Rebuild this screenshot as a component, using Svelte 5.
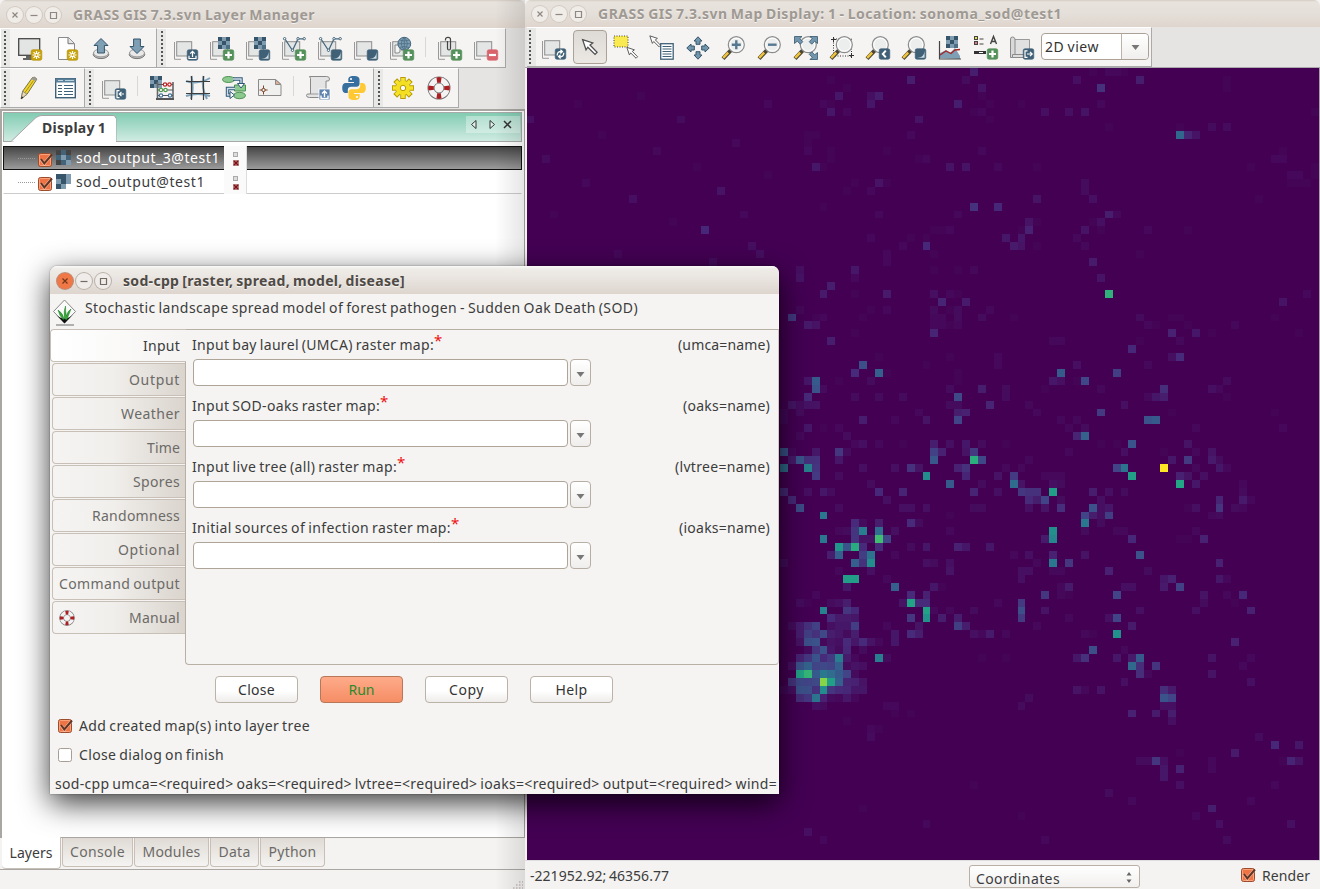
<script>
  // Viridis ramp in steps of ten percent.
  const ramp = [
    [68, 1, 84], [72, 36, 117], [65, 68, 135], [53, 95, 141], [42, 120, 142], [33, 145, 140],
    [34, 168, 132], [68, 191, 112], [122, 209, 81], [189, 223, 38], [253, 231, 37]
  ];
  function viridis(v) {
    const i = Math.min(9, Math.floor(v / 10));
    const f = v / 10 - i;
    return `rgb(${ramp[i].map((c, k) => Math.round(c + (ramp[i + 1][k] - c) * f)).join(',')})`;
  }

  // Raster samples "x,y,percent", one block per map section; each block has
  // its own origin and scale and is snapped to the 100 x 100 grid.
  const CELL = 7.92;
  const blocks = [
    { x: 253, y: 2, sx: 2.904, sy: 3, d: '563,8,8 383,30,8 540,30,3 586,54,5 150,30,1 174,78,6 197,54,1 267,78,4 290,78,8 267,102,6 127,102,2 150,102,1 150,126,6 197,126,2 516,102,8 586,78,1 609,102,1 563,126,1 586,126,2 609,149,1 404,149,5 383,195,2 85,195,1 105,195,1 83,219,1 83,243,2 150,243,1 150,267,1 313,243,1 404,267,1 425,267,2 586,243,2 105,291,6 127,291,1 493,291,5 540,291,5 633,291,2 748,291,1 290,339,5 313,339,1 220,339,1 267,363,2 197,363,1 748,387,5 563,411,14 633,411,11 127,411,1 290,434,2 516,434,2 725,457,5 748,457,1 725,481,9 448,481,1 470,481,1 493,481,2 656,504,6 702,504,6 702,481,1 679,528,7 702,528,5 748,528,1 425,528,11 267,504,2 383,504,1 425,504,1 360,528,2 313,552,2 313,576,2 448,552,1 61,600,4 61,624,5 220,600,6 220,624,2 448,600,1 516,600,1 563,600,2 150,648,8 127,672,7 313,672,7 220,672,1 448,672,4 493,672,2 516,672,1 470,696,10 540,696,7 61,720,2 267,720,1 313,720,2 448,720,3 493,720,1 516,720,3 609,720,2 37,742,17 103,742,1 127,742,2 244,742,1 448,742,2 470,742,2 516,742,3 586,742,3 679,742,1 83,766,7 105,766,5 448,766,2 470,766,2 493,766,1 516,766,2 448,789,10 220,789,1 150,813,8 793,813,2 816,813,2 862,30,4 932,54,14 1048,30,8 908,8,1 955,8,2 978,8,2 1001,8,1 702,102,1 932,102,2 769,126,4 839,126,4 885,126,5 955,172,1 1300,30,1 1300,54,1 1161,195,33 1184,195,10 1207,195,5 1254,172,3 1300,172,3 1161,172,1 1550,126,1 1460,243,1 1437,267,2 1460,267,2 1370,291,1 1484,315,2 1507,315,2 1550,291,1 1550,315,1 1484,339,1 1507,339,1 1530,339,1 885,339,3 885,363,3 908,387,4 955,434,8 978,434,2 932,457,4 908,457,1 885,481,5 932,481,1 862,504,2 885,528,2 1070,481,2 1184,481,1 1391,387,1 1048,552,1 908,576,7 932,624,5 955,672,64 1530,672,2 1460,696,5 1048,742,3 1070,766,2 1093,766,1 1138,742,1 1161,742,1 1184,766,1 1323,766,2 1138,789,9 1207,789,6 1254,789,1 1161,813,2 1507,789,1 1025,833,11 1048,813,1 1437,742,1' },
    { x: 253, y: 232, sx: 3, sy: 3, d: '252,195,24 228,219,12 300,219,30 324,219,1 84,243,6 108,243,28 180,243,1 276,243,3 108,267,25 132,267,3 84,291,12 228,291,3 300,291,3 372,291,3 39,315,6 63,315,3 84,315,5 108,315,5 63,339,3 15,339,2 15,363,2 252,360,8 348,360,2 439,360,5 420,339,2 84,384,6 63,408,2 204,408,3 180,384,2 132,384,1 252,432,4 228,432,2 300,432,2 372,432,1 15,456,26 39,456,2 108,456,6 180,456,16 204,456,3 39,480,7 63,480,26 84,480,14 108,480,14 180,480,6 15,504,35 84,504,43 108,504,15 252,504,4 348,504,4 396,504,14 420,504,5 108,528,17 180,528,3 439,528,48 276,552,3 15,576,12 84,576,4 132,576,6 156,576,3 300,576,11 372,576,10 39,600,12 63,624,23 324,600,4 180,624,3 372,624,4 396,624,4 439,624,4 132,646,40 510,646,1 228,670,12 252,670,3 300,670,8 396,670,12 420,670,3 204,692,3 180,692,2 228,692,15 252,692,42 300,692,36 348,692,4 510,692,2 132,717,40 228,717,15 252,717,5 276,717,5 300,717,69 324,717,20 180,741,52 204,741,26 228,741,62 252,741,12 300,741,12 396,741,3 439,741,6 534,741,9 558,741,6 630,741,6 156,765,8 180,765,30 252,765,18 276,765,38 348,765,2 228,789,30 252,789,14 276,789,48 439,789,4 465,789,3 510,789,4 15,789,3 300,170,1 510,170,1 654,170,2 654,195,2 439,195,1 534,219,1 534,243,1 510,267,3 606,267,8 678,267,3 534,291,22 678,291,3 510,315,3 534,315,3 630,315,10 750,315,2 534,339,8 558,339,9 534,360,20 558,432,6 558,456,5 582,456,17 582,480,63 606,480,21 462,432,8 510,432,4 462,456,19 486,456,9 462,480,27 534,504,9 558,504,14 558,528,10 606,432,3 678,432,1 510,552,28 606,552,3 582,576,10 654,576,4 654,528,5 582,624,3 606,624,3 702,528,17 702,552,35 726,552,5 678,504,2 726,504,2 750,480,2 726,576,16 750,576,12 774,576,12 750,600,10 774,600,9 796,600,22 796,624,8 750,624,4 796,717,8 702,765,2 750,765,4 774,789,3 796,267,2 774,339,2' },
    { x: 253, y: 472, sx: 3, sy: 3, d: '276,93,4 180,93,2 204,117,55 228,117,55 204,141,6 348,141,30 324,117,2 108,165,2 396,165,12 439,165,9 462,141,6 486,141,1 372,189,5 396,189,58 420,189,12 439,189,12 63,189,3 84,189,1 156,189,3 180,189,4 204,189,8 132,211,44 204,211,16 228,211,11 439,211,57 439,235,51 156,235,12 180,235,7 204,235,7 228,235,6 396,235,16 486,235,8 462,211,2 510,211,2 534,235,8 534,258,18 558,258,8 582,211,3 39,258,3 63,258,8 84,258,14 108,258,19 180,258,6 204,258,6 228,258,18 156,258,4 420,258,5 63,282,8 84,282,18 108,282,14 132,282,22 156,282,8 180,282,6 228,282,8 204,282,3 348,282,6 396,282,12 420,282,8 324,258,2 582,282,4 606,282,2 630,282,7 678,282,2 63,306,5 84,306,24 108,306,25 132,306,2 156,306,5 180,306,4 204,306,12 228,306,6 252,306,12 276,306,5 348,306,6 300,306,2 84,330,3 108,330,15 132,330,25 156,330,6 180,330,3 204,330,11 252,330,3 63,354,10 84,354,16 108,354,26 132,354,12 156,354,17 180,354,42 204,354,7 228,354,2 300,354,42 324,354,3 39,378,4 63,378,26 84,378,32 108,378,20 132,378,22 156,378,20 180,378,30 204,378,3 228,378,5 252,378,4 63,402,58 84,402,66 108,402,28 132,402,40 156,402,35 180,402,28 204,402,20 228,402,3 39,426,15 63,426,22 84,426,20 108,426,22 132,426,82 156,426,56 180,426,30 204,426,10 228,426,9 252,426,5 15,450,2 39,450,4 63,450,25 84,450,24 108,450,14 132,450,48 156,450,15 180,450,12 204,450,11 228,450,6 252,450,6 63,474,13 84,474,16 108,474,38 132,474,9 156,474,3 180,474,2 204,474,6 228,474,2 108,498,4 132,498,3 324,498,2 348,498,2 204,545,1 276,569,2 300,569,1 276,590,3 510,93,5 750,93,5 726,93,4 726,117,4 796,165,15 726,189,17 726,211,24 726,235,17 654,189,2 796,211,4 774,258,2 606,354,1 678,354,1 750,474,4 726,498,3 348,522,1 396,522,1' },
    { x: 503, y: 282, sx: 3, sy: 3, d: '309,2,11 450,21,12 426,21,4 141,45,4 357,45,2 93,69,28 69,93,6 93,93,4 165,93,21 261,69,18 141,93,1 45,117,1 213,117,2 402,117,13 378,141,6 402,141,8 357,141,2 594,93,3 546,117,4 570,117,2 594,141,1 285,165,4 213,188,17 426,188,1 736,188,1 357,210,26 378,210,28 93,210,2 141,210,2 117,234,2 165,234,3 498,234,2 760,234,2 141,258,10 165,258,31 213,282,1 261,282,1 309,282,26 474,282,5 285,306,4 474,330,17 426,330,6 498,306,2 546,306,5 546,330,7 570,330,3 402,306,1 117,300,2 261,354,20 285,354,38 309,378,55 402,354,100 450,378,9 474,378,5 522,378,4 498,354,2 570,354,6 594,354,2 450,402,59 498,402,6 69,402,4 93,402,3 45,378,2 69,378,2 93,378,2 69,426,55 3,426,14 21,426,14 189,426,8 237,426,4 285,426,3 642,402,2 642,426,3 21,450,8 3,450,12 45,450,20 93,450,3 213,450,4 570,450,10 642,450,7 666,450,2 45,474,5 93,474,13 189,474,25 213,474,4 237,474,6 498,474,4 474,474,1 570,474,15 618,474,3 642,474,2 165,496,20 189,496,8 213,496,4 237,496,18 570,496,3 546,496,2 165,519,40 213,519,3 69,543,49 69,566,45 45,566,7 165,543,3 261,543,2 285,543,2 309,566,11 522,566,9 498,543,2 450,566,1 474,566,1 333,615,25 69,615,9 165,615,5 69,639,40 117,639,16 21,639,2 570,639,9 3,663,4 69,663,2 93,663,2 237,663,9 357,663,3 402,687,6 426,687,9 402,711,7 450,711,19 570,687,6 594,687,2 117,711,7 93,711,2 285,711,4 309,711,4 45,735,16 93,735,2 117,735,1 261,735,20 522,735,5 594,735,2 642,735,11 522,759,3 618,759,1 45,781,5 333,781,4 498,781,4 666,781,9 117,804,2 237,804,4 261,804,20 21,828,2 309,828,7 261,852,50 165,852,2 189,852,1 618,876,9 189,900,24 285,900,2 141,924,6 165,924,14 261,924,6 309,924,7 333,924,28 309,948,34 333,948,13 378,948,15 333,970,13 357,960,2 546,924,5 546,970,5 666,924,2 642,948,2 285,996,4 666,996,4 141,1020,5 165,1020,2 213,1020,5 402,1020,13 426,1020,7 402,1044,26 426,1044,20 402,1068,4 426,1068,4 309,1090,9 378,1090,7 426,1090,8 426,1113,4 688,1160,3 736,1184,11 807,1184,6 618,1208,7 450,1208,1 378,1232,15 333,1232,3 357,1232,3 402,1232,4 783,1232,10 807,1232,5 760,1232,1 546,1232,2 402,1254,6 450,1254,11 546,1254,2 3,1044,3' },
    { x: 0, y: 0, sx: 1, sy: 1, d: '178,162,11 4,52,4 20,90,3 28,146,1 52,35,1 60,114,2 75,67,1 92,186,2 107,130,4 115,28,1 131,83,2 147,154,1 155,51,3 170,99,1 186,194,3 194,122,5 210,75,2 218,146,2 226,178,4 234,186,4 242,35,2 242,107,1 281,761,4 297,776,2 337,740,1 400,753,2 448,713,1 495,745,1 519,769,2 582,721,3 606,729,2 637,705,6 653,713,4 653,697,9 669,745,2 685,737,8 693,753,4 701,769,3 724,729,2 748,713,2 764,753,4' }
  ];
  const cells = blocks.flatMap((b) =>
    b.d.split(' ').map((s) => {
      const [px, py, v] = s.split(',').map(Number);
      const c = Math.floor((b.x + px / b.sx) / CELL);
      const r = Math.floor((b.y + py / b.sy) / CELL);
      const x = Math.floor(c * CELL), y = Math.round(r * CELL);
      return { x, y, w: Math.floor((c + 1) * CELL) - x, h: Math.round((r + 1) * CELL) - y, fill: viridis(v) };
    })
  );

  // Spreads a line of text over a given width.
  function fit(node, width) {
    const w = node.getBoundingClientRect().width;
    node.style.letterSpacing = (width - w) / node.textContent.length + 'px';
  }

  const layerBars = [
    ['display', 'newfile', 'upload', 'download'],
    ['stackload', 'rastadd', 'rastmisc', 'vectadd', 'vectmisc', 'stackmisc', 'wms', '|', 'clip', 'stackdel']
  ];
  const toolBars = [
    ['pencil', 'table'],
    ['stackimport', '|', 'calc', 'georef', 'modeler', 'layout', '|', 'script', 'python'],
    ['gear', 'buoy']
  ];
  const mapTools = ['stackrender', 'pointer', 'select', 'query', 'pan', 'zoomin', 'zoomout', 'zoomext', 'zoomreg', 'zoomback', 'zoommisc', 'analyze', 'overlay', 'saveimg'];
  const layers = [
    { name: 'sod_output_3@test1', w: 144, on: true },
    { name: 'sod_output@test1', w: 129, on: false }
  ];
  const bottomTabs = [['Layers', 43, 59], ['Console', 55, 71], ['Modules', 58, 75], ['Data', 32, 49], ['Python', 48, 65]];
  const sideTabs = [['Input', 37], ['Output', 51], ['Weather', 59], ['Time', 33], ['Spores', 47], ['Randomness', 88], ['Optional', 62], ['Command output', 121], ['Manual', 51]];
  const fields = [
    ['Input bay laurel (UMCA) raster map:', 242, '(umca=name)', 92],
    ['Input SOD-oaks raster map:', 188, '(oaks=name)', 87],
    ['Input live tree (all) raster map:', 205, '(lvtree=name)', 95],
    ['Initial sources of infection raster map:', 259, '(ioaks=name)', 91]
  ];
</script>

{#snippet stack()}
  <path d="M.5 5v17.3H7" fill="none" stroke="#999" />
  <rect x="2.7" y="4.7" width="15" height="14.3" fill="#e4e5e5" stroke="#8d8d8d" />
{/snippet}
{#snippet badge(kind)}
  {@const fill = { add: '#55915a', del: '#d9646b', star: '#c9a40c' }[kind] ?? '#3f6076'}
  <rect x="13.2" y="12.7" width="10.6" height="10.6" rx="1.8" {fill} stroke={kind === 'star' ? '#af8c00' : fill} stroke-width=".6" />
  {#if kind === 'add'}<path d="M18.5 14.5v7M15 18h7" stroke="#fff" stroke-width="2.2" />
  {:else if kind === 'del'}<path d="M15 18h7" stroke="#fff" stroke-width="2.2" />
  {:else if kind === 'star'}<path d="M18.5 14v8M14.5 18h8M15.6 15.1l5.8 5.8M21.4 15.1l-5.8 5.8" stroke="#fff" stroke-width="1.2" /><circle cx="18.5" cy="18" r="1" fill="#c9a40c" />
  {:else if kind === 'misc'}<path d="M14.5 15V14h8c0 4-2.5 6.500-6.500 6.500z" fill="#3f6076" /><path d="M15 21.800c4.800 0 7.200-2.300 7.600-7.200v7.200z" fill="#cddae2" />
  {:else if kind === 'up'}<path d="M18.500 20v-5.500M16.200 16.600l2.300-2.300 2.300 2.300M15 18.800v2.700h7v-2.700" fill="none" stroke="#fff" stroke-width="1.200" />
  {:else if kind === 'left'}<path d="M22 18h-4.500M19.500 15.800L17.300 18l2.200 2.200M17.500 14.600H15v7h2.500" fill="none" stroke="#fff" stroke-width="1.200" />
  {:else if kind === 'right'}<path d="M17 18h5M20 15.800l2.200 2.200-2.200 2.200M17.500 14.800H15v6.500h2.500" fill="none" stroke="#fff" stroke-width="1.200" />
  {:else if kind === 'back'}<path d="M19.800 14.600L16.800 18l3 3.400" fill="none" stroke="#fff" stroke-width="2" />
  {:else if kind === 'sync'}<path d="M15.200 19.500c0-3 1.500-4.200 4.500-4M18.400 13.800l2 1.800-2 1.800M21.800 16.800c0 3-1.500 4.200-4.500 4M18.600 18.800l-2 1.800 2 1.800" fill="none" stroke="#fff" stroke-width="1.300" />{/if}
{/snippet}
{#snippet checker()}
  <rect x="8" width="12" height="12" fill="#7e9bb0" />
  <path d="M8 0h4v4H8zM16 0h4v4h-4zM12 4h4v4h-4zM8 8h4v4H8z" fill="#36546a" />
  <path d="M16 8h4v4h-4z" fill="#4d6f86" />
{/snippet}
{#snippet vect()}
  <path d="M3 2l7.500 11.500L16 1.800h6.500" fill="none" stroke="#45677d" stroke-width="1.300" />
  <g fill="#fff" stroke="#45677d"><circle cx="2.600" cy="1.700" r="1.200" /><circle cx="10.500" cy="13.300" r="1.200" /><circle cx="16" cy="1.700" r="1.200" /><circle cx="22.200" cy="1.700" r="1.200" /></g>
{/snippet}
{#snippet lens()}
  <path d="M1 22.600l7.800-8.200" stroke="#4b4534" stroke-width="4" />
  <path d="M1.200 21.800l5-5.200" stroke="#f0c53c" stroke-width="2.400" />
  <circle cx="14.300" cy="8.700" r="8" fill="#eceeee" stroke="#8b8b8b" stroke-width="1.200" />
  <circle cx="14.300" cy="8.700" r="6.500" fill="none" stroke="#fff" />
{/snippet}
{#snippet arrow()}
  <path d="M1 1l9 3-2.500 1.800 6.300 6.400-1.800 1.800-6.400-6.300L4 10z" fill="#fff" stroke="#4f4f4f" stroke-width="1.100" />
{/snippet}
{#snippet buoy()}
  <circle cx="12" cy="12" r="8" fill="none" stroke="#6f6f6f" stroke-width="7" />
  <circle cx="12" cy="12" r="8" fill="none" stroke="#f3f3f3" stroke-width="5.400" />
  <path d="M9.400 1.400a11 11 0 015.200 0L13.700 7a6 6 0 00-3.400 0zM9.400 22.600a11 11 0 005.200 0L13.700 17a6 6 0 01-3.400 0zM1.400 9.400a11 11 0 000 5.200L7 13.700a6 6 0 010-3.400zM22.600 9.400a11 11 0 010 5.200L17 13.700a6 6 0 000-3.400z" fill="#a91f22" />
{/snippet}

{#snippet icon(n)}
  <svg class="ico" viewBox="0 0 24 24" width="24" height="24">
    {#if n === 'display'}
      <path d="M5 22h9M8 20h7" stroke="#333" stroke-width="1.600" />
      <rect x=".7" y="1.700" width="21" height="16.600" fill="#e3e4e4" stroke="#484848" stroke-width="1.300" />{@render badge('star')}
    {:else if n === 'newfile'}
      <path d="M4.500.5h10l6 6v16h-16z" fill="#fdfdfd" stroke="#8a8a8a" /><path d="M14 .7v6h6" fill="#e3e3e3" stroke="#777" />{@render badge('star')}
    {:else if n === 'upload' || n === 'download'}
      <ellipse cx="11" cy="17.300" rx="7.800" ry="4.300" fill="#bbb" stroke="#777" /><ellipse cx="11" cy="16" rx="7.500" ry="3.900" fill="#e9e9e9" stroke="#999" />
      {#if n === 'upload'}<path d="M11 1.500l7 7h-3.600V16H7.600V8.500H4z" fill="#7e9fb4" stroke="#34566d" />{:else}<path d="M11 16.500l7-7h-3.600V2H7.600v7.500H4z" fill="#7e9fb4" stroke="#34566d" />{/if}
    {:else if n === 'stackload'}{@render stack()}{@render badge('up')}
    {:else if n === 'stackmisc'}{@render stack()}{@render badge('misc')}
    {:else if n === 'stackdel'}{@render stack()}{@render badge('del')}
    {:else if n === 'stackimport'}{@render stack()}{@render badge('left')}
    {:else if n === 'stackrender'}{@render stack()}{@render badge('sync')}
    {:else if n === 'rastadd'}{@render stack()}{@render checker()}{@render badge('add')}
    {:else if n === 'rastmisc'}{@render stack()}{@render checker()}{@render badge('misc')}
    {:else if n === 'vectadd'}{@render stack()}{@render vect()}{@render badge('add')}
    {:else if n === 'vectmisc'}{@render stack()}{@render vect()}{@render badge('misc')}
    {:else if n === 'wms'}
      {@render stack()}
      <path d="M5 8h5v6q0 2-2 2H5zM8 6h4v8" fill="#f4f4f4" stroke="#888" />
      <circle cx="14.300" cy="6.700" r="6.400" fill="#7e9fb4" stroke="#44667d" /><path d="M8 6.700h12.600M14.300.4v12.600M9.500 3q5 2 9.600 0M9.500 10.500q5-2 9.600 0M14.300.4q-6 6.300 0 12.600M14.300.4q6 6.300 0 12.600" fill="none" stroke="#4b6d84" stroke-width=".8" />
      {@render badge('add')}
    {:else if n === 'clip'}
      {@render stack()}<path d="M7.500 3.500V2.400q0-2 2.500-2t2.500 2v8.800q0 1.800-1.500 1.800t-1.500-1.800V4" fill="none" stroke="#444" stroke-width="1.200" />{@render badge('add')}
    {:else if n === 'pencil'}
      <path d="M3.200 22.800l1.500-7.600L14.500 1.500q2.300-1.200 4.400 1.600L9 18.300z" fill="#f1d52f" stroke="#777248" /><path d="M3.200 22.800l1.500-7.600 4.300 3z" fill="#ead9ad" stroke="#777" stroke-width=".8" /><path d="M13 3.500l1.500-2q2.300-1.200 4.400 1.600l-1.500 2.300q-1.500-2.200-4.400-1.900z" fill="#999" /><path d="M3 23.200l.8-3 1.600 1.200z" fill="#222" /><path d="M7 16.500l8.500-12" stroke="#aa9118" />
    {:else if n === 'table'}
      <rect x="1.700" y="2.700" width="19.600" height="19" fill="#fff" stroke="#3f6076" stroke-width="1.400" /><path d="M1.500 4.500h20" stroke="#5a7f98" stroke-width="4" /><path d="M4 4.500h5M11 4.500h9" stroke="#b8d2df" /><path d="M4 9.500h4M4 12.500h4M4 15.500h4M4 18.500h4M10 9.500h9M10 12.500h9M10 15.500h9M10 18.500h9" stroke="#3c6178" stroke-width="1.200" />
    {:else if n === 'calc'}
      <path d="M0 0h12v12H0z" fill="#7e9bb0" /><path d="M0 0h4v4H0zM8 0h4v4H8zM4 4h4v4H4zM0 8h4v4H0z" fill="#36546a" />
      <path d="M7.500 6v17M23 6v17" stroke="#666" stroke-width="1.600" /><path d="M6 23h18" stroke="#555" stroke-width="2" /><path d="M8 8.500h15M8 14h15M8 19.500h15" stroke="#555" />
      <g stroke-width="1.200" fill="#fff"><g stroke="#b22"><circle cx="15" cy="8.500" r="1.700" /><circle cx="19.500" cy="8.500" r="1.700" /></g><g stroke="#4f9a4f"><circle cx="11" cy="14" r="1.700" /><circle cx="15.500" cy="14" r="1.700" /></g><g stroke="#41729a"><circle cx="11" cy="19.500" r="1.700" /><circle cx="20" cy="19.500" r="1.700" /></g></g>
    {:else if n === 'georef'}
      <path d="M5.500 0Q8 12 5 23M17.500 0Q15 12 21 23M0 5q12 4 24-3M0 20q12-4 24 0" fill="none" stroke="#7ba0b8" stroke-width="2" /><path d="M5.500 0v24M17.500 0v24M0 5.500h24M0 17.500h24" stroke="#3d3d3d" stroke-width="1.200" />
    {:else if n === 'modeler'}
      <ellipse cx="6.500" cy="3.500" rx="6" ry="3" fill="#8cc98e" stroke="#4b9150" /><path d="M12.500 9h11v6h-11z" fill="#8cc98e" stroke="#4b9150" /><ellipse cx="17.500" cy="19.500" rx="6" ry="3.200" fill="#8cc98e" stroke="#4b9150" />
      <path d="M11 3h8v5" fill="none" stroke="#2f5878" stroke-width="3.400" /><path d="M11 3h8v5" fill="none" stroke="#cfdeea" stroke-width="1.400" /><path d="M15.500 7.500h7L19 12z" fill="#fff" stroke="#2f5878" />
      <path d="M13 12.500H5.500V19H8" fill="none" stroke="#2f5878" stroke-width="3.400" /><path d="M13 12.500H5.500V19H8" fill="none" stroke="#cfdeea" stroke-width="1.400" /><path d="M8 15.500v7l4.500-3.500z" fill="#fff" stroke="#2f5878" />
    {:else if n === 'layout'}
      <path d="M.5 3.500h17l5.500 5V19.500H.5z" fill="#f0f0ee" stroke="#8a8a8a" /><path d="M17.500 3.500v5H23z" fill="#dcae95" stroke="#8a8a8a" /><path d="M5.500 9.500v3M5.500 15.500v3M1.500 14h2.800M6.800 14h2.800" stroke="#7c452a" /><circle cx="5.500" cy="14" r="1.700" fill="none" stroke="#7c452a" />
    {:else if n === 'script'}
      <path d="M3.500.5h17.200q2.800 0 2.800 2.500t-2.500 2H20v16.500H3.500Q.500 21.500.500 19.500T3 18h1.500V5Q5 2 3.500.500z" fill="#e4e4e4" stroke="#888" /><path d="M4.500 18H15" stroke="#999" /><rect x="13" y="13" width="11" height="11" fill="#5e83ad" stroke="#fff" stroke-width=".8" /><path d="M18.500 21v-5.500M16 17.500l2.500-2.500 2.500 2.500M15 19.500v3h7v-3" fill="none" stroke="#fff" stroke-width="1.400" />
    {:else if n === 'python'}
      <path d="M11.800 0C7 0 6.300 1.800 6.300 3.500V6H12v1H3.800C1.500 7 .2 8.800.2 12s1.300 5 3.300 5h2.300v-3c0-2 1.500-3.200 3.300-3.200h5.600c1.500 0 2.800-1.200 2.800-2.800V3.500C17.500 1.500 15.800 0 11.800 0z" fill="#376f9f" />
      <path d="M12.200 24c4.800 0 5.500-1.800 5.500-3.500V18H12v-1h8.200c2.300 0 3.600-1.800 3.600-5s-1.300-5-3.300-5h-2.300v3c0 2-1.500 3.200-3.300 3.200H9.300c-1.500 0-2.800 1.200-2.800 2.800v4.500c0 2 1.700 3.500 5.700 3.500z" fill="#ffc933" /><circle cx="9" cy="3" r="1.100" fill="#fff" /><circle cx="15" cy="21" r="1.100" fill="#fff" />
    {:else if n === 'gear'}
      <g stroke="#b99a00" stroke-width="5.400"><path d="M12 1v22M1 12h22M4.200 4.200l15.600 15.600M19.800 4.200L4.200 19.800" /></g><g stroke="#f5e32d" stroke-width="3.600"><path d="M12 1.900v20.200M1.900 12h20.200M4.900 4.900l14.200 14.200M19.100 4.900L4.900 19.100" /></g>
      <circle cx="12" cy="12" r="7.200" fill="#f4df22" /><circle cx="12" cy="12" r="2.700" fill="#fff" stroke="#b99a00" />
    {:else if n === 'buoy'}{@render buoy()}
    {:else if n === 'pointer'}<g transform="translate(3.500 2.500) scale(1.130)">{@render arrow()}</g>
    {:else if n === 'select'}
      <rect x="0" y="0" width="14" height="11" fill="#f9ea52" stroke="#444" stroke-dasharray="1 1.500" /><g transform="translate(12 10.500) scale(.84)">{@render arrow()}</g>
    {:else if n === 'query'}
      <g transform="translate(-1 -1) scale(.84)">{@render arrow()}</g><rect x="10.700" y="7.700" width="12.500" height="15.500" fill="#fff" stroke="#3f6076" stroke-width="1.300" /><path d="M12.500 10.500h9M12.500 13h9M12.500 15.500h9M12.500 18h9M12.500 20.500h9" stroke="#3f6076" />
    {:else if n === 'pan'}
      <g fill="#7396ad" stroke="#34566d">{#each [0, 90, 180, 270] as a}<path transform="rotate({a} 12 12)" d="M12 .8l4 4.200h-2v3.300h-4V5H8z" />{/each}</g>
    {:else if n === 'zoomin'}{@render lens()}<path d="M14.300 4.200v9M9.800 8.700h9" stroke="#54788f" stroke-width="2.400" />
    {:else if n === 'zoomout'}{@render lens()}<path d="M10 8.700h8.600" stroke="#54788f" stroke-width="2.400" />
    {:else if n === 'zoomext'}{@render lens()}<g fill="#7396ad" stroke="#34566d" stroke-width=".8"><path d="M.5.5H8L5.800 2.700l3 3-2.500 2.500-3-3L.5 7.500zM23.500.5H16l2.200 2.200-3 3 2.500 2.500 3-3 2.800 2.300zM23.500 23.500H16l2.200-2.200-3-3 2.500-2.500 3 3 2.800-2.300z" /></g>
    {:else if n === 'zoomreg'}<path d="M3.500 4v16h18M3.500 3h18v17" fill="none" stroke="#333" stroke-dasharray="1 1.500" />{@render lens()}<path d="M3.500 1v5M1 3.500h5M21.500 17v5M19 19.500h5" stroke="#333" />
    {:else if n === 'zoomback'}{@render lens()}{@render badge('back')}
    {:else if n === 'zoommisc'}{@render lens()}{@render badge('misc')}
    {:else if n === 'analyze'}
      {@render checker()}<path d="M2 22v-5l6-3 4 3 5-5 5 8v3z" fill="#7e9fb4" /><path d="M1.500 5v18H23" fill="none" stroke="#444" stroke-width="1.200" /><path d="M2 19l6-4 5 2.500 4-3.500 5-.5" fill="none" stroke="#a32727" stroke-width="1.300" />
    {:else if n === 'overlay'}
      <rect x=".5" y=".5" width="3" height="3" fill="#ead940" stroke="#444" /><rect x=".5" y="5.500" width="3" height="3" fill="#d77" stroke="#444" /><path d="M5.500 3h4M5.500 8h4" stroke="#444" /><path d="M16.500 8l3-7.500 3 7.500M17.600 5.500h3.800" fill="none" stroke="#444" stroke-width="1.400" /><path d="M0 16.500h12" stroke="#333" stroke-width="3" /><path d="M5 16.500h4" stroke="#fff" />{@render badge('add')}
    {:else if n === 'saveimg'}
      <path d="M4.500 3.500h15v18h-15z" fill="#e0e0e0" stroke="#999" /><path d="M.5 3Q.5 1 2.500 1t2.500 2v18.500H.5z" fill="#d9d9d9" stroke="#8a8a8a" /><path d="M2.500 18.500h12v3h-12z" fill="#ddd" stroke="#8a8a8a" />{@render badge('right')}
    {/if}
  </svg>
{/snippet}

{#snippet bar(items)}
  <div class="bar"><i class="grip"></i>
    <div class="items">{#each items as n}{#if n === '|'}<i class="sep"></i>{:else}{@render icon(n)}{/if}{/each}</div>
  </div>
{/snippet}

{#snippet titlebar(text, w)}
  <header class="title">
    <b class="wb"><svg viewBox="0 0 16 16"><path d="M5.500 5.500l5 5M10.500 5.500l-5 5" /></svg></b>
    <b class="wb"><svg viewBox="0 0 16 16"><path d="M4.500 8.500h7" /></svg></b>
    <b class="wb"><svg viewBox="0 0 16 16"><path d="M5.500 5.500h6v6h-6z" /></svg></b>
    <span class="cap"><span use:fit={w}>{text}</span></span>
  </header>
{/snippet}

{#snippet check(on)}
  <svg class="check" viewBox="0 0 17 16" width="17" height="16">
    <rect x="1.500" y="1.500" width="13" height="13" rx="2" fill={on ? '#ee7445' : '#fff'} stroke={on ? '#9b4c2c' : '#a89f94'} />
    {#if on}<rect x="2.500" y="2.500" width="11" height="11" rx="1" fill="none" stroke="#f9a27b" /><path d="M4 7.500l3.300 4L14 3.500" fill="none" stroke="#fff" stroke-opacity=".4" stroke-width="3.400" /><path d="M4 7l3.300 4.300L15 2.500" fill="none" stroke="#5f3524" stroke-width="2" />{/if}
  </svg>
{/snippet}

<div class="desk">
  <section class="win left">
    {@render titlebar('GRASS GIS 7.3.svn Layer Manager', 242)}
    <div class="bars">{#each layerBars as b}{@render bar(b)}{/each}</div>
    <div class="bars second">{#each toolBars as b}{@render bar(b)}{/each}</div>
    <div class="book">
      <div class="strip">
        <svg class="dtab" width="120" height="30" viewBox="0 0 120 30"><path d="M0 29.500H8L33 5.500Q36 3.500 39 3.500h71q3 0 3 3v24" fill="#fff" stroke="#a5a5a5" /><path d="M10 30.500L34 6l6-2h70l3 3v24z" fill="#fff" /></svg>
        <strong><span use:fit={64}>Display 1</span></strong>
        <svg class="nav" width="54" height="17" viewBox="0 0 54 17"><path d="M10 4.500v8l-4.500-4zM24 4.500v8l4.500-4z" fill="#e4f3ee" stroke="#333" /><path d="M38 5l7 7M45 5l-7 7" stroke="#333" stroke-width="1.500" /></svg>
      </div>
      <div class="tree">
        {#each layers as l}
          <div class="layer" class:sel={l.on}>
            <i class="dots"></i>{@render check(true)}
            <svg class="rast" width="16" height="16" viewBox="0 0 16 16"><path d="M0 0h15v15H0z" fill="#7e9bb0" />{#if l.on}<path d="M0 0h5v5H0zM10 0h5v5h-5zM0 10h5v5H0z" fill="#444" /><path d="M5 0h5v5H5zM0 5h5v5H0zM10 5h5v5h-5zM5 10h5v5H5z" fill="#436379" />{:else}<path d="M0 0h5v5H0zM5 5h5v5H5zM0 10h5v5H0zM5 0h5v5H5z" fill="#36546a" /><path d="M10 10h5v5h-5z" fill="#fff" />{/if}</svg>
            <span class="lname"><span use:fit={l.w}>{l.name}</span></span>
            <span class="mini"><i></i><svg width="6" height="6" viewBox="0 0 6 6"><path d="M0 0h6v6H0z" fill="#b98080" /><path d="M1 1l4 4M5 1L1 5" stroke="#7b0d12" stroke-width="1.300" /></svg></span>
          </div>
        {/each}
      </div>
    </div>
    <nav class="btabs">{#each bottomTabs as [t, w, bw], i}<span class="bt" class:on={i === 0} style="width:{bw}px"><span use:fit={w}>{t}</span></span>{/each}</nav>
    <footer><svg width="12" height="10" viewBox="0 0 12 10"><path d="M2 9h10M5 6h7M8 3h4" stroke="#c4bfba" stroke-width="1.300" stroke-dasharray="1.500 1.500" /></svg></footer>
  </section>

  <section class="win right">
    {@render titlebar('GRASS GIS 7.3.svn Map Display: 1 - Location: sonoma_sod@test1', 464)}
    <div class="bars map-bars">
      <div class="bar"><i class="grip"></i>
        <div class="items">{#each mapTools as n}{#if n === 'pointer'}<span class="pressed">{@render icon(n)}</span>{:else}{@render icon(n)}{/if}{/each}</div>
        <div class="combo"><span class="ct"><span use:fit={54}>2D view</span></span><i class="dd"><svg width="9" height="7" viewBox="0 0 9 7"><path d="M.5 1h8l-4 5z" fill="#777" /></svg></i></div>
      </div>
    </div>
    <svg class="map" width="792" height="792" shape-rendering="crispEdges">
      <rect width="792" height="792" fill="#440154" />
      {#each cells as c}<rect x={c.x} y={c.y} width={c.w} height={c.h} fill={c.fill} />{/each}
    </svg>
    <footer class="status">
      <span class="pos"><span use:fit={139}>-221952.92; 46356.77</span></span>
      <div class="spin"><span use:fit={84}>Coordinates</span><svg width="8" height="13" viewBox="0 0 8 13"><path d="M4 1l2.500 3.500h-5zM4 12l2.500-3.500h-5z" fill="#666" /></svg></div>
      <span class="render">{@render check(true)}<span use:fit={48}>Render</span></span>
    </footer>
  </section>

  <section class="dialog">
    {@render titlebar('sod-cpp [raster, spread, model, disease]', 282)}
    <div class="desc">
      <svg width="26" height="28" viewBox="0 0 26 28"><path d="M12.500 1l11 11.500-11 11.500-11-11.500z" fill="#fafafa" stroke="#888" /><path d="M4 15.500l8.500 9 8.500-9q-4 4-8.500 4T4 15.500z" fill="#111" /><path d="M12.500 20q-1-8 1-13-.2 5 1 10 1-5 4.500-7-2 5-4 10.500zM12 20q-1-6-6-9 1.500 6 5 9.500z" fill="#3aa63a" stroke="#1c7a26" stroke-width=".5" /><path d="M4 26h18" stroke="#999" stroke-width="1.500" /></svg>
      <span class="dt"><span use:fit={553}>Stochastic landscape spread model of forest pathogen - Sudden Oak Death (SOD)</span></span>
    </div>
    <div class="body">
      <nav class="side">
        {#each sideTabs as [t, w], i}
          <span class="st" class:on={i === 0}>{#if t === 'Manual'}<svg width="16" height="16" viewBox="0 0 24 24">{@render buoy()}</svg>{/if}<span use:fit={w}>{t}</span></span>
        {/each}
      </nav>
      <div class="form">
        {#each fields as [label, w, key, kw]}
          <div class="lab"><span><span use:fit={w}>{label}</span><em>*</em></span><span use:fit={kw}>{key}</span></div>
          <div class="inp"><i class="box"></i><i class="drop"><svg width="9" height="7" viewBox="0 0 9 7"><path d="M.5 1h8l-4 5z" fill="#777" /></svg></i></div>
        {/each}
      </div>
    </div>
    <div class="btns">
      <span class="btn"><span use:fit={37}>Close</span></span><span class="btn run"><span use:fit={26}>Run</span></span><span class="btn"><span use:fit={35}>Copy</span></span><span class="btn"><span use:fit={32}>Help</span></span>
    </div>
    <label class="opt">{@render check(true)}<span use:fit={231}>Add created map(s) into layer tree</span></label>
    <label class="opt two">{@render check(false)}<span use:fit={145}>Close dialog on finish</span></label>
    <div class="cmd"><span use:fit={722}>sod-cpp umca=&lt;required&gt; oaks=&lt;required&gt; lvtree=&lt;required&gt; ioaks=&lt;required&gt; output=&lt;required&gt; wind=</span></div>
  </section>
</div>

<style>
  :global(body) { background: #f5f4f2; }
  .desk { position: relative; display: flex; width: 1320px; height: 889px; overflow: hidden; font: 14px/18px "Noto Sans", "Open Sans", sans-serif; word-spacing: -1px; color: #3c3c3c; background: #f5f4f2; }
  .desk :global(*) { box-sizing: border-box; }
  span { white-space: nowrap; }
  i { font-style: normal; display: block; }
  .win { position: relative; display: flex; flex-direction: column; flex: none; height: 889px; background: #f4f3f1; overflow: hidden; }
  .left { width: 525px; }
  .left::after { content: ""; position: absolute; right: 0; top: 0; width: 30px; height: 100%; background: linear-gradient(90deg, transparent, rgba(0,0,0,.1)); }
  .right { width: 795px; }
  .right::after { content: ""; position: absolute; right: 0; top: 68px; width: 1px; height: 792px; background: #a79fa6; }
  .title { flex: none; display: flex; align-items: center; height: 28px; padding: 2px 0 0 7px; gap: 3px; background: linear-gradient(#d5cdc5 0, #e8e3dd 2px, #e4dfd9 14px, #dfd5cd); border-radius: 6px 6px 0 0; color: #9f9993; }
  .right .title { height: 27px; padding-top: 1px; }
  .wb { width: 16px; height: 16px; border-radius: 50%; background: #f0ece8; box-shadow: 0 0 0 1px #d3cac1; }
  .wb svg { display: block; width: 16px; height: 16px; fill: none; stroke: #8f8881; stroke-width: 1.200; }
  .cap { font-weight: 700; margin-left: 9px; text-shadow: 0 1px 0 rgba(255,255,255,.7); }
  .bars { flex: none; display: flex; height: 40px; background: #e5e4e2; }
  .bars.second { height: 41px; }
  .bar { display: flex; height: 40px; background: #f5f4f2; border-top: 1px solid #fff; border-right: 1px solid #aaa; border-bottom: 1px solid #aaa; }
  .bar:first-child { border-left: 1px solid #fff; }
  .grip { width: 9px; margin-right: 1px; background: radial-gradient(circle, #555 45%, transparent 60%) 4px 5px / 2px 4px repeat-y, #e8e8e6; }
  .bar:first-child .grip { background-position: 3px 5px, 0 0; }
  .left .bars:not(.second) .bar:first-child { width: 157px; }
  .left .bars:not(.second) .bar:nth-child(2) { width: 349px; }
  .second .bar:nth-child(1) { width: 85px; }
  .second .bar:nth-child(2) { width: 289px; }
  .second .bar:nth-child(3) { width: 85px; }
  .items { display: flex; gap: 12px; padding: 8px 0 0 7px; }
  .second .items { padding-top: 7px; }
  .ico { display: block; flex: none; overflow: visible; }
  .sep { width: 1px; height: 20px; margin: 0 0 0 -1px; background: #d9d7d4; }
  .map-bars .bar { width: 625px; border-left: 0; }
  .map-bars { height: 41px; padding-left: 2px; border-bottom: 1px solid #aaa; }
  .map-bars .grip { margin-right: 0; }
  .map-bars .bar:first-child .grip { background-position: 2px 5px, 0 0; }
  .map-bars .items { padding-left: 6px; }
  .pressed { width: 34px; height: 34px; margin: -6px -5px 0; padding: 5px 4px; background: linear-gradient(#dedad5, #ebe8e4); border: 1px solid #aba196; border-radius: 4px; }
  .combo { display: flex; width: 108px; height: 27px; margin: 5px 0 0 7px; background: #fff; border: 1px solid #aba196; border-radius: 4px; color: #333; }
  .ct { width: 80px; padding: 4px 0 0 3px; border-right: 1px solid #bbb3aa; }
  .dd { flex: 1; padding: 10px 0 0 9px; background: linear-gradient(#fff, #f0efed); border-radius: 0 4px 4px 0; }
  .dd svg, .drop svg { display: block; }
  .map { display: block; flex: none; margin-left: 2px; }
  .status { display: flex; height: 29px; border-top: 1px solid #ddd; position: relative; }
  .pos { width: 444px; padding: 6px 0 0 5px; }
  .spin { display: flex; justify-content: space-between; width: 171px; height: 23px; margin-top: 4px; padding: 4px 6px 0 6px; overflow: hidden; border: 1px solid #b9b0a6; border-radius: 3px; background: linear-gradient(#fff, #f1f0ee); line-height: 18px; }
  .spin svg { margin-top: 1px; }
  .render { display: flex; gap: 5px; margin: 6px 0 0 100px; }
  .check { flex: none; display: block; }

  .book { flex: none; height: 729px; border: 1px solid #aaa6a1; border-width: 2px 1px 1px 2px; background: #fff; }
  .strip { position: relative; display: flex; height: 30px; margin: 1px 2px 0 1px; border: 1px solid #a7aaa8; background: linear-gradient(#82ccb2, #d0ebe2); }
  .dtab { display: block; margin: -1px 0 0 -1px; }
  .strip strong { position: absolute; left: 38px; top: 6px; }
  .nav { position: absolute; right: 1px; top: 3px; background: rgba(255,255,255,.35); }
  .tree { margin: 4px 2px 0 1px; }
  .layer { display: flex; height: 24px; padding-left: 14px; border: 1px solid transparent; border-bottom-color: #ccc; align-items: center; }
  .layer .check { position: relative; top: 2px; left: -1px; }
  .sel { color: #fff; border: 1px solid #111; background: linear-gradient(#464646, #9b9b9b); }
  .dots { width: 18px; height: 1px; margin-right: 2px; background: repeating-linear-gradient(90deg, #999 0 1px, transparent 1px 2px); }
  .rast { margin-left: 1px; }
  .lname { width: 156px; padding-left: 4px; }
  .mini { display: flex; flex-direction: column; gap: 3px; width: 23px; height: 24px; margin-left: -4px; padding: 6px 0 0 9px; background: #fafafa; border-right: 1px solid #ddd; line-height: 6px; }
  .mini i { width: 5px; height: 5px; background: #ddd; border: 1px solid #aaa; }
  .mini svg { display: block; }
  .btabs { flex: none; display: flex; align-items: flex-start; gap: 1px; height: 32px; padding-left: 2px; border-bottom: 1px solid #aaa6a1; }
  .bt { display: flex; justify-content: center; height: 29px; padding-top: 5px; color: #6c6a67; background: linear-gradient(#dfdad4, #f5f4f2); border: 1px solid #c8c0b7; border-top: 0; border-radius: 0 0 4px 4px; }
  .bt.on { height: 32px; margin-top: -1px; padding-top: 7px; color: #3c3c3c; background: #fff; border-left: 0; }
  .left footer { display: flex; justify-content: flex-end; align-items: flex-end; flex: 1; padding-right: 2px; }

  .dialog { position: absolute; left: 50px; top: 266px; width: 729px; height: 528px; overflow: visible; border-radius: 7px 7px 0 0; background: #f5f4f2; box-shadow: 0 9px 30px rgba(0,0,0,.78), 0 0 2px rgba(0,0,0,.4); }
  .dialog .title { height: 28px; padding-top: 2px; background: linear-gradient(#fbfaf9 0, #efece8 3px, #e8e3de 14px, #ddd5ce); border-radius: 7px 7px 0 0; color: #4f4a45; }
  .dialog .wb { background: #efece9; box-shadow: 0 0 0 1px #b9b1a9; }
  .dialog .wb svg { stroke: #736b64; }
  .dialog .wb:first-child { background: #f07746; box-shadow: 0 0 0 1px #ba8e7a; }
  .dialog .wb:first-child svg { stroke: #703719; }
  .desc { display: flex; height: 35px; padding: 5px 0 0 2px; }
  .dt { padding-left: 7px; }
  .body { display: flex; height: 336px; }
  .side { display: flex; flex-direction: column; gap: 1px; width: 136px; padding-left: 2px; z-index: 1; }
  .st { display: flex; align-items: center; justify-content: flex-end; position: relative; height: 33px; padding-right: 5px; color: #6c6a67; border: 1px solid #c8c0b7; border-right: 0; border-radius: 4px 0 0 4px; background: linear-gradient(90deg, #f5f4f2, #f1efec 45%, #dad4cd); margin-right: 1px; }
  .st.on { height: 33px; margin: 0 0 0 -2px; padding-right: 6px; color: #3c3c3c; background: linear-gradient(90deg, #fff, #f5f4f2); }
  .st svg { margin-right: auto; margin-left: 6px; }
  .form { flex: 1; margin-left: -1px; padding: 5px 8px 0 7px; border: 1px solid #b9b0a5; border-right-color: #cfc8c1; border-radius: 0 0 4px 4px; }
  .lab { display: flex; justify-content: space-between; height: 24px; margin-left: -1px; padding-top: 1px; }
  .lab em { color: #e11; font-style: normal; font-size: 15px; line-height: 8px; position: relative; top: -4px; }
  .inp { display: flex; gap: 2px; height: 37px; }
  .box { width: 375px; height: 27px; background: #fff; border: 1px solid #aea498; border-radius: 4px; }
  .drop { width: 21px; height: 27px; padding: 11px 0 0 5px; background: linear-gradient(#fff, #efeeec); border: 1px solid #b7aea4; border-radius: 4px; }
  .btns { display: flex; gap: 22px; padding: 11px 0 0 165px; height: 48px; }
  .btn { display: flex; justify-content: center; width: 83px; height: 27px; padding-top: 4px; color: #333; background: linear-gradient(#fff 55%, #efedeb); border: 1px solid #bbb2a8; border-radius: 4px; }
  .run { color: #2b8a2b; background: linear-gradient(#feab8a, #f58d65); border-color: #b87757; }
  .opt { display: flex; gap: 5px; height: 29px; padding: 4px 0 0 7px; }
  .opt .check { margin-top: 1px; }
  .cmd { padding: 4px 0 0 5px; overflow: hidden; width: 728px; }
</style>
